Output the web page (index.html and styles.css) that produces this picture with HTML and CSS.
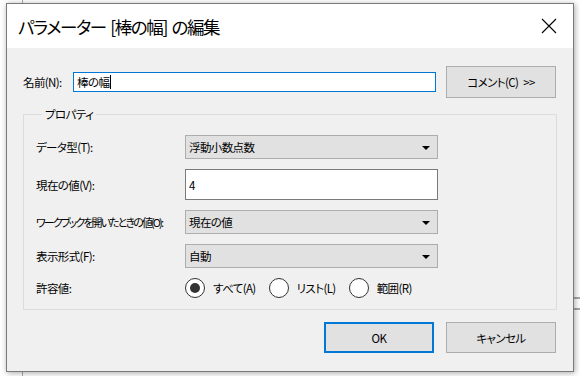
FILE: index.html
```html
<!DOCTYPE html>
<html lang="ja">
<head>
  <meta charset="UTF-8" />
  <title>パラメーターの編集</title>
  <link rel="stylesheet" href="styles.css">
</head>
<body>
  <div class="dialog">
    <div class="titlebar">
      <span class="title">パラメーター [棒の幅] の編集</span>
      <svg class="close" width="16" height="16" viewBox="0 0 16 16">
        <path d="M1 1L15 15M15 1L1 15" stroke="#000" stroke-width="1.1" fill="none"/>
      </svg>
    </div>

    <div class="content">
      <div class="name-row">
        <label class="name-label">名前(N):</label>
        <div class="name-input">棒の幅<span class="caret"></span></div>
        <button class="btn comment">コメント(C) &gt;&gt;</button>
      </div>

      <fieldset class="props">
        <legend>プロパティ</legend>
        <div class="grid">
          <label>データ型(T):</label>
          <div class="select">浮動小数点数<span class="arrow"></span></div>

          <label>現在の値(V):</label>
          <div class="text-input">4</div>

          <label class="tight">ワークブックを開いたときの値(O):</label>
          <div class="select">現在の値<span class="arrow"></span></div>

          <label>表示形式(F):</label>
          <div class="select">自動<span class="arrow"></span></div>

          <label>許容値:</label>
          <div class="radios">
            <span class="radio checked"><span class="dot"></span>すべて(A)</span>
            <span class="radio"><span class="dot"></span>リスト(L)</span>
            <span class="radio"><span class="dot"></span>範囲(R)</span>
          </div>
        </div>
      </fieldset>

      <div class="actions">
        <button class="btn ok">OK</button>
        <button class="btn">キャンセル</button>
      </div>
    </div>
  </div>
</body>
</html>
```

FILE: styles.css
```css
html, body {
  margin: 0;
  padding: 0;
}

body {
  width: 580px;
  height: 376px;
  overflow: hidden;
  font-family: "Noto Sans CJK JP", "Noto Sans", sans-serif;
  font-feature-settings: "palt";
  font-size: 11.5px;
  letter-spacing: -0.6px;
  white-space: nowrap;
  color: #000;
  /* bits of the window behind the dialog */
  background:
    linear-gradient(#a8a8a8, #a8a8a8) 22px 0 / 1px 100% no-repeat,
    linear-gradient(#a8a8a8, #a8a8a8) 570px 297px / 10px 2px no-repeat,
    linear-gradient(#a8a8a8, #a8a8a8) 570px 308px / 10px 2px no-repeat,
    #fff;
}

.dialog {
  box-sizing: border-box;
  width: 568px;
  height: 369px;
  margin: 3px 0 0 6px;
  border: 1px solid #7a7a7a;
  background: #f0f0f0;
  box-shadow: 1px 1px 6px rgba(0, 0, 0, 0.35);
  display: flex;
  flex-direction: column;
}

.titlebar {
  height: 44px;
  background: #fff;
  display: flex;
  align-items: center;
  justify-content: space-between;
  padding: 0 16px 0 11px;
}

.title {
  font-size: 17.5px;
  letter-spacing: -1.4px;
  word-spacing: 2px;
  line-height: 24px;
  margin-top: 1px;
}

.close {
  display: block;
  margin-top: -1px;
}

.content {
  padding: 18px 16px 0 16px;
}

.name-row {
  display: flex;
  align-items: center;
  height: 32px;
}

.name-label {
  width: 50px;
}

.name-input {
  box-sizing: border-box;
  width: 363px;
  height: 20px;
  border: 1px solid #0078d7;
  background: #fff;
  padding-left: 3px;
  line-height: 18px;
  display: flex;
  align-items: center;
}

.caret {
  display: inline-block;
  width: 1px;
  height: 14px;
  background: #000;
  margin-left: 1px;
}

.btn {
  box-sizing: border-box;
  width: 110px;
  height: 31px;
  border: 1px solid #adadad;
  background: #e1e1e1;
  font-family: inherit;
  font-feature-settings: "palt";
  font-size: 11.5px;
  letter-spacing: -0.6px;
  word-spacing: 3px;
  color: #000;
  padding: 0;
}

.comment {
  height: 32px;
  margin-left: 10px;
}

.props {
  margin: 8px 0 0 0;
  padding: 13px 12px 11px 12px;
  border: 1px solid #dcdcdc;
}

.props legend {
  margin-left: 6px;
  padding: 0 3px;
  line-height: 16px;
}

.grid {
  display: grid;
  grid-template-columns: 149px 253px;
  grid-template-rows: 24px 31px 24px 24px 20px;
  row-gap: 10px;
  align-items: center;
}

.tight {
  font-size: 11px;
  letter-spacing: -1.9px;
}

.select {
  box-sizing: border-box;
  height: 24px;
  border: 1px solid #adadad;
  background: #e1e1e1;
  padding: 0 7px 0 3px;
  display: flex;
  align-items: center;
  justify-content: space-between;
}

.arrow {
  width: 0;
  height: 0;
  border-left: 4px solid transparent;
  border-right: 4px solid transparent;
  border-top: 4px solid #000;
  margin-top: 1px;
}

.text-input {
  box-sizing: border-box;
  height: 31px;
  border: 1px solid #7a7a7a;
  background: #fff;
  padding-left: 3px;
  display: flex;
  align-items: center;
}

.radios {
  display: flex;
  align-items: center;
  gap: 13px;
}

.radio {
  display: flex;
  align-items: center;
  gap: 8px;
}

.dot {
  box-sizing: border-box;
  width: 20px;
  height: 20px;
  border: 1.5px solid #333;
  border-radius: 50%;
  background: #fff;
  display: flex;
  align-items: center;
  justify-content: center;
}

.radio.checked .dot::after {
  content: "";
  width: 10px;
  height: 10px;
  border-radius: 50%;
  background: #333;
}

.actions {
  display: flex;
  justify-content: flex-end;
  gap: 12px;
  margin: 12px 1px 0 0;
}

.ok {
  border: 2px solid #0078d7;
}
```
